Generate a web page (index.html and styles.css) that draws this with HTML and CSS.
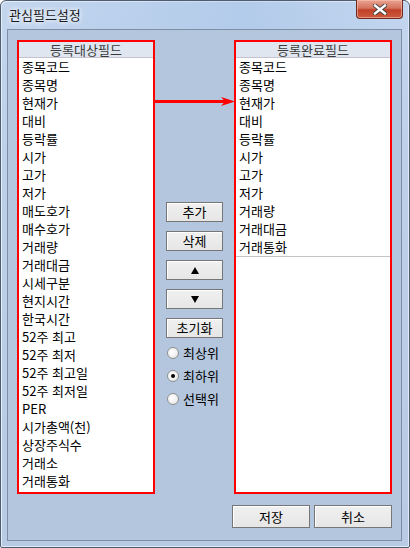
FILE: index.html
```html
<!DOCTYPE html>
<html lang="ko">
<head>
<meta charset="utf-8">
<title>관심필드설정</title>
<link rel="stylesheet" href="styles.css">
</head>
<body>
<div class="window">
  <div class="titlebar">
    <span class="title">관심필드설정</span>
    <div class="close">
      <svg width="14" height="11" viewBox="0 0 14 11">
        <path d="M2 1.5 L12 9.5 M12 1.5 L2 9.5" stroke="#3b3b3b" stroke-width="4.2" stroke-linecap="square" fill="none"/>
        <path d="M2 1.5 L12 9.5 M12 1.5 L2 9.5" stroke="#ffffff" stroke-width="2.4" stroke-linecap="square" fill="none"/>
      </svg>
    </div>
  </div>
  <div class="client">
    <div class="main">
      <div class="listbox left">
        <div class="head">등록대상필드</div>
        <div class="item">종목코드</div>
        <div class="item">종목명</div>
        <div class="item">현재가</div>
        <div class="item">대비</div>
        <div class="item">등락률</div>
        <div class="item">시가</div>
        <div class="item">고가</div>
        <div class="item">저가</div>
        <div class="item">매도호가</div>
        <div class="item">매수호가</div>
        <div class="item">거래량</div>
        <div class="item">거래대금</div>
        <div class="item">시세구분</div>
        <div class="item">현지시간</div>
        <div class="item">한국시간</div>
        <div class="item">52주 최고</div>
        <div class="item">52주 최저</div>
        <div class="item">52주 최고일</div>
        <div class="item">52주 최저일</div>
        <div class="item">PER</div>
        <div class="item">시가총액(천)</div>
        <div class="item">상장주식수</div>
        <div class="item">거래소</div>
        <div class="item">거래통화</div>
      </div>
      <div class="middle">
        <div class="btn">추가</div>
        <div class="btn">삭제</div>
        <div class="btn"><svg width="8" height="7" viewBox="0 0 8 7"><polygon points="4,0 8,7 0,7" fill="#000"/></svg></div>
        <div class="btn"><svg width="8" height="7" viewBox="0 0 8 7"><polygon points="0,0 8,0 4,7" fill="#000"/></svg></div>
        <div class="btn">초기화</div>
        <div class="radios">
          <div class="radio"><span class="dot"></span>최상위</div>
          <div class="radio"><span class="dot on"></span>최하위</div>
          <div class="radio"><span class="dot"></span>선택위</div>
        </div>
      </div>
      <div class="listbox right">
        <div class="head">등록완료필드</div>
        <div class="item">종목코드</div>
        <div class="item">종목명</div>
        <div class="item">현재가</div>
        <div class="item">대비</div>
        <div class="item">등락률</div>
        <div class="item">시가</div>
        <div class="item">고가</div>
        <div class="item">저가</div>
        <div class="item">거래량</div>
        <div class="item">거래대금</div>
        <div class="item">거래통화</div>
        <div class="sep"></div>
      </div>
      <svg class="arrow" width="82" height="12" viewBox="0 0 82 12">
        <rect x="0" y="4" width="72" height="3" fill="#ff0000"/>
        <polygon points="66,1 80,5.5 66,10 70,5.5" fill="#ff0000"/>
      </svg>
    </div>
    <div class="bottom">
      <div class="btn big">저장</div>
      <div class="btn big">취소</div>
    </div>
  </div>
</div>
</body>
</html>
```

FILE: styles.css
```css
html, body {
  margin: 0;
  padding: 0;
  background: #ffffff;
}

body {
  font-family: "Noto Sans CJK KR", "Noto Sans", sans-serif;
  font-size: 13px;
  color: #000;
}

.window {
  box-sizing: border-box;
  width: 410px;
  height: 548px;
  border: 1px solid #4f5d6e;
  border-radius: 6px 6px 2px 2px;
  background: linear-gradient(180deg, #c3d6ee 0%, #bcd0ea 30%, #b7cbe4 100%);
  padding: 0 7px 6px 6px;
  display: flex;
  flex-direction: column;
  box-shadow: inset 1px 1px 0 #e4eef9, inset -1px -1px 0 #e0eaf6;
}

.titlebar {
  height: 28px;
  display: flex;
  justify-content: space-between;
  align-items: flex-start;
  background: linear-gradient(90deg, rgba(255,255,255,0) 0%, rgba(150,185,228,0.35) 60%, rgba(255,255,255,0) 100%);
  margin: 0 -7px 0 -6px;
  padding: 0 7px 0 6px;
}

.title {
  margin-top: 6px;
  margin-left: 2px;
  font-size: 13px;
  line-height: 16px;
  color: #1a1a1a;
  text-shadow: 0 0 4px #ffffff, 0 0 6px #ffffff;
}

.close {
  width: 45px;
  height: 18px;
  margin-top: -1px;
  margin-right: -1px;
  border: 1px solid #6b2a1f;
  border-top: none;
  border-radius: 0 0 4px 4px;
  background: linear-gradient(180deg, #e9a492 0%, #d5735d 45%, #c04128 55%, #cf5a3e 100%);
  box-shadow: inset 0 0 0 1px rgba(255, 200, 185, 0.55);
  display: flex;
  align-items: center;
  justify-content: center;
}

.client {
  box-sizing: border-box;
  height: 512px;
  border: 1px solid #7d8ea5;
  background: #b3c6de;
  padding: 10px 9px 0 9px;
  display: flex;
  flex-direction: column;
}

.main {
  position: relative;
  display: flex;
  gap: 11px;
  height: 454px;
}

.listbox {
  box-sizing: border-box;
  height: 454px;
  border: 2px solid #ff0000;
  background: #ffffff;
}

.listbox.left { width: 138px; }
.listbox.right { width: 158px; }

.head {
  box-sizing: border-box;
  height: 16px;
  line-height: 15px;
  text-align: center;
  background: #dfe6ef;
  border-bottom: 1px solid #c6c2d2;
  color: #3a3a3a;
}

.item {
  height: 18px;
  line-height: 18px;
  padding-left: 3px;
  white-space: nowrap;
}

.sep {
  height: 1px;
  background: #c4c4c4;
}

.middle {
  width: 57px;
  padding-top: 162px;
  display: flex;
  flex-direction: column;
  gap: 9px;
}

.btn {
  box-sizing: border-box;
  height: 20px;
  border: 1px solid #767676;
  background: linear-gradient(180deg, #f0f0f0 0%, #e6e6e6 100%);
  box-shadow: inset 1px 1px 0 #ffffff;
  display: flex;
  align-items: center;
  justify-content: center;
  line-height: 16px;
}

.radios {
  margin-top: -6px;
  display: flex;
  flex-direction: column;
}

.radio {
  height: 23px;
  display: flex;
  align-items: center;
  gap: 4px;
  margin-left: 1px;
}

.dot {
  box-sizing: border-box;
  width: 12px;
  height: 12px;
  border-radius: 50%;
  border: 1px solid #8e8f8f;
  background: radial-gradient(circle at 40% 40%, #ffffff 0%, #f2f2f2 50%, #d6d6d6 100%);
  display: flex;
  align-items: center;
  justify-content: center;
}

.dot.on::after {
  content: "";
  width: 4px;
  height: 4px;
  border-radius: 50%;
  background: #000;
}

.arrow {
  position: absolute;
  left: 138px;
  top: 56px;
}

.bottom {
  margin-top: 11px;
  display: flex;
  justify-content: flex-end;
  gap: 4px;
}

.btn.big {
  width: 78px;
  height: 23px;
}
```
